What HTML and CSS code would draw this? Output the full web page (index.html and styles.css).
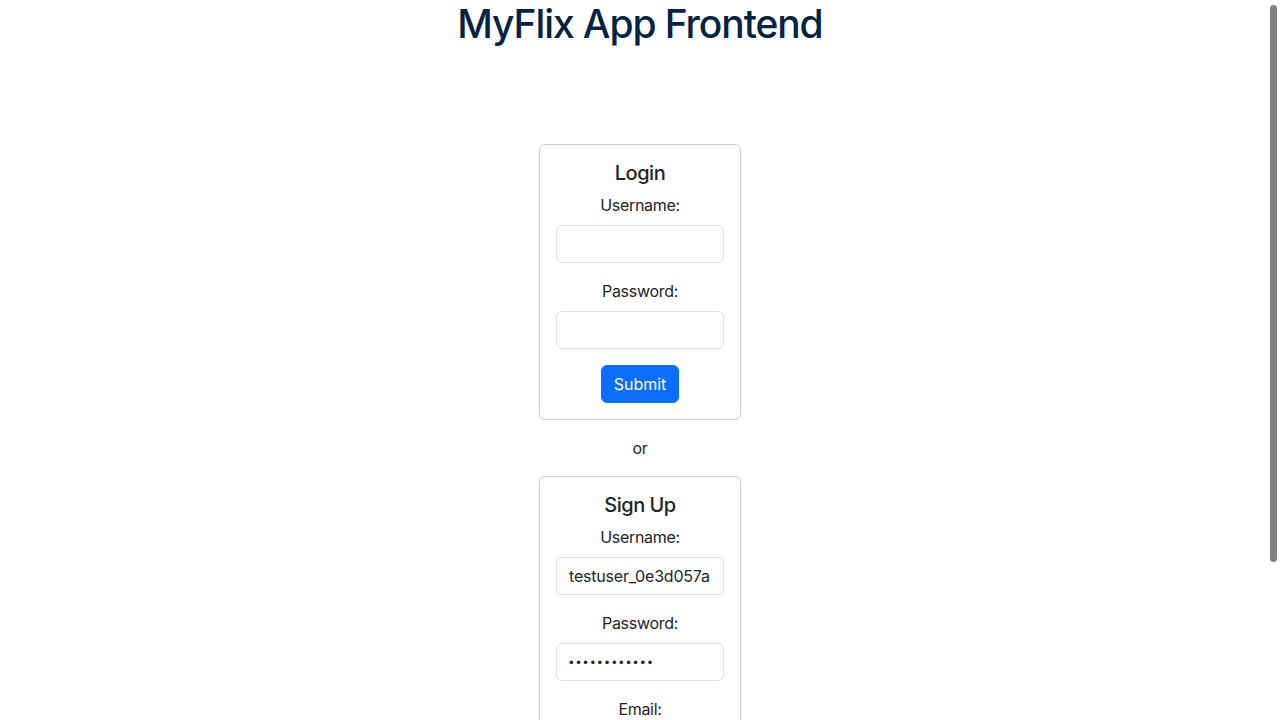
FILE: index.html
```html
<!DOCTYPE html>
<html lang="en">
<head>
<meta charset="utf-8">
<title>MyFlix App Frontend</title>
<link rel="stylesheet" href="styles.css">
</head>
<body>
<div class="app">
  <h1 class="app-title">MyFlix App Frontend</h1>
  <main class="auth">
    <form class="card">
      <h2 class="card-title">Login</h2>
      <label class="field-label" for="lu">Username:</label>
      <input class="field" id="lu" type="text">
      <label class="field-label" for="lp">Password:</label>
      <input class="field field-pw" id="lp" type="password">
      <button class="btn" type="button">Submit</button>
    </form>
    <p class="or">or</p>
    <form class="card">
      <h2 class="card-title">Sign Up</h2>
      <label class="field-label" for="su">Username:</label>
      <input class="field" id="su" type="text" value="testuser_0e3d057a">
      <label class="field-label" for="sp">Password:</label>
      <input class="field field-pw" id="sp" type="password" value="password1234">
      <label class="field-label" for="se">Email:</label>
      <input class="field" id="se" type="email">
      <label class="field-label" for="sb">Birthday:</label>
      <input class="field" id="sb" type="text">
      <button class="btn" type="button">Submit</button>
    </form>
  </main>
</div>
<div class="scroll-thumb" aria-hidden="true"></div>
</body>
</html>
```
FILE: styles.css
```css
html {
  background: #fff;
  scrollbar-width: none;
}
html::-webkit-scrollbar {
  display: none;
}
body {
  margin: 0;
  font-family: Inter, "Noto Sans", "Liberation Sans", sans-serif;
  font-size: 16px;
  line-height: 1.5;
  color: #212529;
  letter-spacing: -0.3px;
}
.app {
  display: flex;
  flex-direction: column;
  align-items: center;
  padding-bottom: 80px;
}
.app-title {
  margin: 0 0 96px;
  font-size: 39px;
  font-weight: 500;
  line-height: 48px;
  color: #062341;
  letter-spacing: -1.1px;
}
.auth {
  display: flex;
  flex-direction: column;
  align-items: center;
}
.card {
  width: 168px;
  padding: 16px;
  border: 1px solid rgba(0, 0, 0, 0.175);
  border-radius: 6px;
  display: flex;
  flex-direction: column;
  align-items: center;
}
.card-title {
  margin: 0 0 8px;
  font-size: 20px;
  font-weight: 500;
  line-height: 1.2;
  letter-spacing: -0.5px;
}
.field-label {
  margin-bottom: 8px;
}
.field {
  box-sizing: border-box;
  width: 168px;
  height: 38px;
  margin: 0 0 16px;
  padding: 6px 12px;
  border: 1px solid #dee2e6;
  border-radius: 6px;
  font-family: inherit;
  font-size: 16px;
  letter-spacing: -0.2px;
  color: #212529;
  background: #fff;
}
.field-pw {
  font-family: "Liberation Sans", sans-serif;
  font-size: 13px;
  letter-spacing: 2.6px;
}
.btn {
  height: 38px;
  padding: 6px 12px;
  border: 1px solid #0d6efd;
  border-radius: 6px;
  background: #0d6efd;
  color: #fff;
  font-family: inherit;
  font-size: 16px;
  line-height: 1.5;
  letter-spacing: 0;
}
.or {
  margin: 16px 0;
}
.scroll-thumb {
  position: fixed;
  top: 5px;
  right: 3px;
  width: 7px;
  height: 557px;
  border-radius: 4px;
  background: #808080;
}
```
